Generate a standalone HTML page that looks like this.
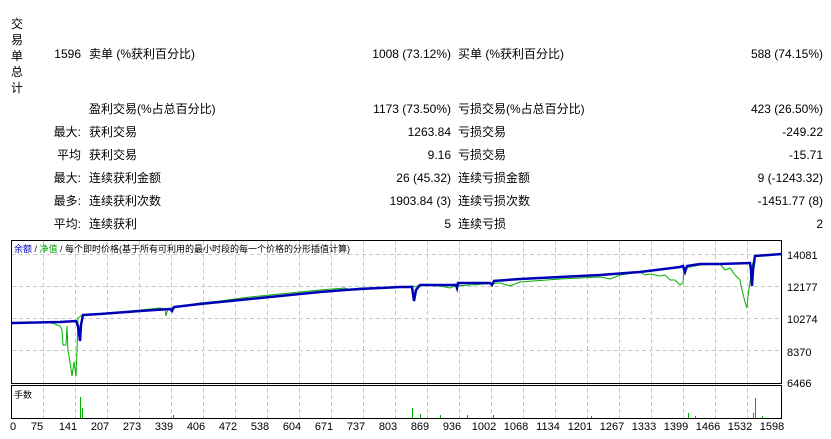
<!DOCTYPE html>
<html><head><meta charset="utf-8"><style>
body{margin:0;width:831px;height:439px;background:#fff;font-family:"Liberation Sans","Noto Sans CJK SC",sans-serif;font-size:12px;color:#000;position:relative;overflow:hidden}
.t{position:absolute;white-space:nowrap;line-height:14px}
.r{text-align:right}
</style></head><body>
<div class="t" style="left:11px;top:16px;width:14px;line-height:16px">交<br>易<br>单<br>总<br>计</div>

<div class="t r" style="right:750px;top:47px">1596</div>
<div class="t" style="left:89px;top:47px">卖单 (%获利百分比)</div>
<div class="t r" style="right:380px;top:47px">1008 (73.12%)</div>
<div class="t" style="left:458px;top:47px">买单 (%获利百分比)</div>
<div class="t r" style="right:8px;top:47px">588 (74.15%)</div>

<div class="t" style="left:89px;top:102px">盈利交易(%占总百分比)</div>
<div class="t r" style="right:380px;top:102px">1173 (73.50%)</div>
<div class="t" style="left:458px;top:102px">亏损交易(%占总百分比)</div>
<div class="t r" style="right:8px;top:102px">423 (26.50%)</div>

<div class="t r" style="right:750px;top:125px">最大:</div>
<div class="t" style="left:89px;top:125px">获利交易</div>
<div class="t r" style="right:380px;top:125px">1263.84</div>
<div class="t" style="left:458px;top:125px">亏损交易</div>
<div class="t r" style="right:8px;top:125px">-249.22</div>

<div class="t r" style="right:750px;top:148px">平均</div>
<div class="t" style="left:89px;top:148px">获利交易</div>
<div class="t r" style="right:380px;top:148px">9.16</div>
<div class="t" style="left:458px;top:148px">亏损交易</div>
<div class="t r" style="right:8px;top:148px">-15.71</div>

<div class="t r" style="right:750px;top:171px">最大:</div>
<div class="t" style="left:89px;top:171px">连续获利金额</div>
<div class="t r" style="right:380px;top:171px">26 (45.32)</div>
<div class="t" style="left:458px;top:171px">连续亏损金额</div>
<div class="t r" style="right:8px;top:171px">9 (-1243.32)</div>

<div class="t r" style="right:750px;top:194px">最多:</div>
<div class="t" style="left:89px;top:194px">连续获利次数</div>
<div class="t r" style="right:380px;top:194px">1903.84 (3)</div>
<div class="t" style="left:458px;top:194px">连续亏损次数</div>
<div class="t r" style="right:8px;top:194px">-1451.77 (8)</div>

<div class="t r" style="right:750px;top:217px">平均:</div>
<div class="t" style="left:89px;top:217px">连续获利</div>
<div class="t r" style="right:380px;top:217px">5</div>
<div class="t" style="left:458px;top:217px">连续亏损</div>
<div class="t r" style="right:8px;top:217px">2</div>

<svg style="position:absolute;left:0;top:0" width="831" height="439" font-family="Liberation Sans,Noto Sans CJK SC,sans-serif" font-size="11">
<g stroke="#c8c8c8" stroke-dasharray="4,3" stroke-width="1">
<line x1="12" y1="254.5" x2="781" y2="254.5"/><line x1="12" y1="286.5" x2="781" y2="286.5"/><line x1="12" y1="318.5" x2="781" y2="318.5"/><line x1="12" y1="350.5" x2="781" y2="350.5"/>
<g id="v">
<line x1="43.5" y1="241" x2="43.5" y2="418"/><line x1="75.5" y1="241" x2="75.5" y2="418"/><line x1="107.5" y1="241" x2="107.5" y2="418"/><line x1="139.5" y1="241" x2="139.5" y2="418"/><line x1="171.5" y1="241" x2="171.5" y2="418"/><line x1="203.5" y1="241" x2="203.5" y2="418"/><line x1="235.5" y1="241" x2="235.5" y2="418"/><line x1="267.5" y1="241" x2="267.5" y2="418"/><line x1="299.5" y1="241" x2="299.5" y2="418"/><line x1="331.5" y1="241" x2="331.5" y2="418"/><line x1="363.5" y1="241" x2="363.5" y2="418"/><line x1="395.5" y1="241" x2="395.5" y2="418"/><line x1="427.5" y1="241" x2="427.5" y2="418"/><line x1="459.5" y1="241" x2="459.5" y2="418"/><line x1="491.5" y1="241" x2="491.5" y2="418"/><line x1="523.5" y1="241" x2="523.5" y2="418"/><line x1="555.5" y1="241" x2="555.5" y2="418"/><line x1="587.5" y1="241" x2="587.5" y2="418"/><line x1="619.5" y1="241" x2="619.5" y2="418"/><line x1="651.5" y1="241" x2="651.5" y2="418"/><line x1="683.5" y1="241" x2="683.5" y2="418"/><line x1="715.5" y1="241" x2="715.5" y2="418"/><line x1="747.5" y1="241" x2="747.5" y2="418"/>
</g></g>
<rect x="11.5" y="240.5" width="770" height="143" fill="none" stroke="#000"/>
<rect x="11.5" y="385.5" width="770" height="33" fill="none" stroke="#000"/>
<text x="14" y="252" font-size="9"><tspan fill="#0000c0">余额</tspan> / <tspan fill="#00a000">净值</tspan> / 每个即时价格(基于所有可利用的最小时段的每一个价格的分形插值计算)</text>
<text x="14" y="398" font-size="9">手数</text>
<polyline fill="none" stroke="#00b000" stroke-width="1" points="12,323 26,322 40,323 46,322 52,323 60,326 62,330 63,345 66,345 67,326 68,351 70,362 72,376 74,362 76,376 77,350 78,318 82,315 100,314 110,313 130,311 140,310 160,308 165,309 166,316 168,309 175,307 200,303 220,301 250,297 280,294 320,290 345,288 350,290 360,288 400,287 413,286 415,287 420,285 440,286 450,288 455,286 470,285 500,283 510,286 520,282 560,279 600,277 610,279 620,275 640,272 645,275 650,274 660,276 665,275 670,280 675,280 680,285 683,283 684,268 700,265 720,264 725,270 730,268 735,275 740,280 742,290 745,302 747,308 748,296 750,282 752,266 755,256 782,254"/>
<polyline fill="none" stroke="#0000b8" stroke-width="2.5" points="12,323 60,322 76,321 78,326 80,341 81,325 83,315 100,314 140,311 170,309 172,311 174,307 200,304 260,298 320,292 345,290 360,289 400,287 412,287 414,301 416,290 420,285 440,285 456,285 457,288 458,283 480,283 490,283 492,285 494,281 520,279 560,277 600,275 640,272 680,267 683,266 685,272 687,266 700,264 720,264 750,263 751,270 752,286 753,270 755,256 782,254"/>
<g stroke="#00b000" stroke-width="1">
<line x1="80.5" y1="397" x2="80.5" y2="418"/><line x1="82.5" y1="408" x2="82.5" y2="418"/><line x1="173.5" y1="415" x2="173.5" y2="418"/><line x1="412.5" y1="408" x2="412.5" y2="418"/><line x1="420.5" y1="414" x2="420.5" y2="418"/><line x1="440.5" y1="415" x2="440.5" y2="418"/><line x1="467.5" y1="415" x2="467.5" y2="418"/><line x1="493.5" y1="415" x2="493.5" y2="418"/><line x1="591.5" y1="416" x2="591.5" y2="418"/><line x1="688.5" y1="413" x2="688.5" y2="418"/><line x1="695.5" y1="416" x2="695.5" y2="418"/><line x1="753.5" y1="413" x2="753.5" y2="418"/><line x1="755.5" y1="398" x2="755.5" y2="418"/><line x1="762.5" y1="416" x2="762.5" y2="418"/>
</g>
<g fill="#000">
<text x="787" y="259">14081</text><text x="787" y="291">12177</text><text x="787" y="323">10274</text><text x="787" y="356">8370</text><text x="787" y="387">6466</text>
</g>
<g fill="#000" text-anchor="middle">
<text x="13" y="430">0</text><text x="37" y="430">75</text><text x="68" y="430">141</text><text x="100" y="430">207</text><text x="132" y="430">273</text><text x="164" y="430">339</text><text x="196" y="430">406</text><text x="228" y="430">472</text><text x="260" y="430">538</text><text x="292" y="430">604</text><text x="324" y="430">671</text><text x="356" y="430">737</text><text x="388" y="430">803</text><text x="420" y="430">869</text><text x="452" y="430">936</text><text x="484" y="430">1002</text><text x="516" y="430">1068</text><text x="548" y="430">1134</text><text x="580" y="430">1201</text><text x="612" y="430">1267</text><text x="644" y="430">1333</text><text x="676" y="430">1399</text><text x="708" y="430">1466</text><text x="740" y="430">1532</text><text x="772" y="430">1598</text>
</g>
</svg>
</body></html>
